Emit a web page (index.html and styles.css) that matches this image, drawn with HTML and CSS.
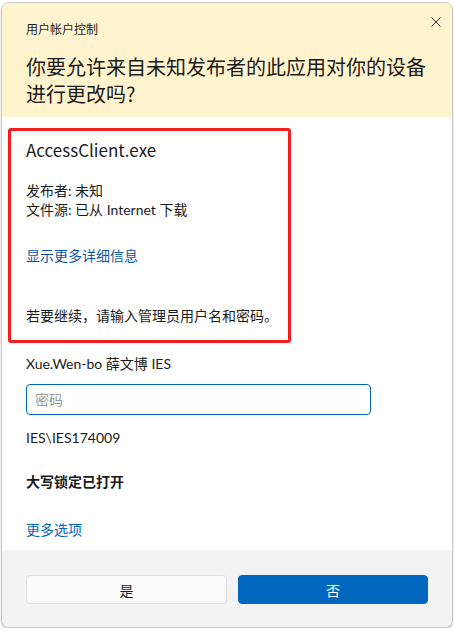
FILE: index.html
```html
<!DOCTYPE html>
<html lang="zh-CN">
<head>
  <meta charset="UTF-8">
  <title>用户帐户控制</title>
  <link rel="stylesheet" href="styles.css">
</head>
<body>
  <div class="dialog">
    <div class="header">
      <div class="caption">用户帐户控制</div>
      <button class="close-button" aria-label="关闭">
        <svg width="10" height="10" viewBox="0 0 10 10">
          <path d="M0.5 0.5 L9.5 9.5 M9.5 0.5 L0.5 9.5" stroke="#333" stroke-width="1" fill="none"/>
        </svg>
      </button>
      <div class="question">你要允许来自未知发布者的此应用对你的设备进行更改吗?</div>
    </div>

    <div class="content">
      <div class="app-info">
        <div class="app-name">AccessClient.exe</div>
        <div class="details">
          <div>发布者: 未知</div>
          <div>文件源: 已从 Internet 下载</div>
        </div>
        <a class="details-link" href="#">显示更多详细信息</a>
        <div class="hint">若要继续，请输入管理员用户名和密码。</div>
      </div>

      <div class="user-name">Xue.Wen-bo 薛文博 IES</div>
      <input class="password-box" type="password" placeholder="密码">
      <div class="domain">IES\IES174009</div>
      <div class="caps-warning">大写锁定已打开</div>
      <a class="more-link" href="#">更多选项</a>
    </div>

    <div class="footer">
      <button class="btn btn-yes">是</button>
      <button class="btn btn-no">否</button>
    </div>
  </div>
</body>
</html>
```

FILE: styles.css
```css
body {
  margin: 0;
  background-color: #fff;
  font-family: "Noto Sans CJK SC", "Noto Sans", sans-serif;
  color: #1b1b1b;
}

.dialog {
  width: 450px;
  margin: 2px 0 0 1px;
  border: 1px solid #c9c9c9;
  border-radius: 8px;
  overflow: hidden;
  box-shadow: 0 2px 3px rgba(0, 0, 0, 0.18);
  background-color: #fff;
}

.header {
  position: relative;
  background-color: #fff4ce;
  padding: 18px 16px 10px 24px;
}

.caption {
  font-size: 12px;
  line-height: 16px;
}

.close-button {
  position: absolute;
  top: 11px;
  right: 8px;
  width: 16px;
  height: 16px;
  padding: 0;
  border: none;
  background: none;
  display: flex;
  align-items: center;
  justify-content: center;
}

.question {
  margin-top: 16px;
  font-size: 20px;
  line-height: 27px;
}

.content {
  padding: 11px 24px 11px 24px;
  font-family: Lato, "Noto Sans CJK SC", sans-serif;
  font-size: 14px;
  line-height: 19px;
}

.app-info {
  margin-left: -18px;
  width: 262px;
  border: 3px solid #f01e1e;
  border-radius: 3px;
  padding: 7px 0 15px 15px;
}

.app-name {
  font-family: "Noto Sans CJK SC", sans-serif;
  font-size: 17px;
  line-height: 24px;
}

.details {
  margin-top: 19px;
}

.details-link {
  display: block;
  margin-top: 27px;
  color: #0b56a4;
  text-decoration: none;
}

.hint {
  margin-top: 41px;
  white-space: nowrap;
}

.user-name {
  margin-top: 11px;
}

.password-box {
  display: block;
  box-sizing: border-box;
  width: 345px;
  height: 31px;
  margin-top: 11px;
  padding: 0 8px;
  border: 1px solid #0067c0;
  border-radius: 4px;
  font-family: inherit;
  font-size: 14px;
  outline: none;
}

.password-box::placeholder {
  color: #9a9a9a;
}

.domain {
  margin-top: 13px;
}

.caps-warning {
  margin-top: 25px;
  font-weight: bold;
}

.more-link {
  display: block;
  margin-top: 29px;
  color: #0067c0;
  text-decoration: none;
}

.footer {
  background-color: #f3f3f3;
  display: flex;
  gap: 11px;
  padding: 25px 24px 23px 24px;
}

.btn {
  height: 29px;
  border-radius: 4px;
  font-family: "Noto Sans CJK SC", sans-serif;
  font-size: 14px;
}

.btn-yes {
  width: 202px;
  background-color: #fbfbfb;
  border: 1px solid #e1e1e1;
  color: #1b1b1b;
}

.btn-no {
  width: 191px;
  background-color: #0067c0;
  border: 1px solid #0067c0;
  color: #fff;
}
```
